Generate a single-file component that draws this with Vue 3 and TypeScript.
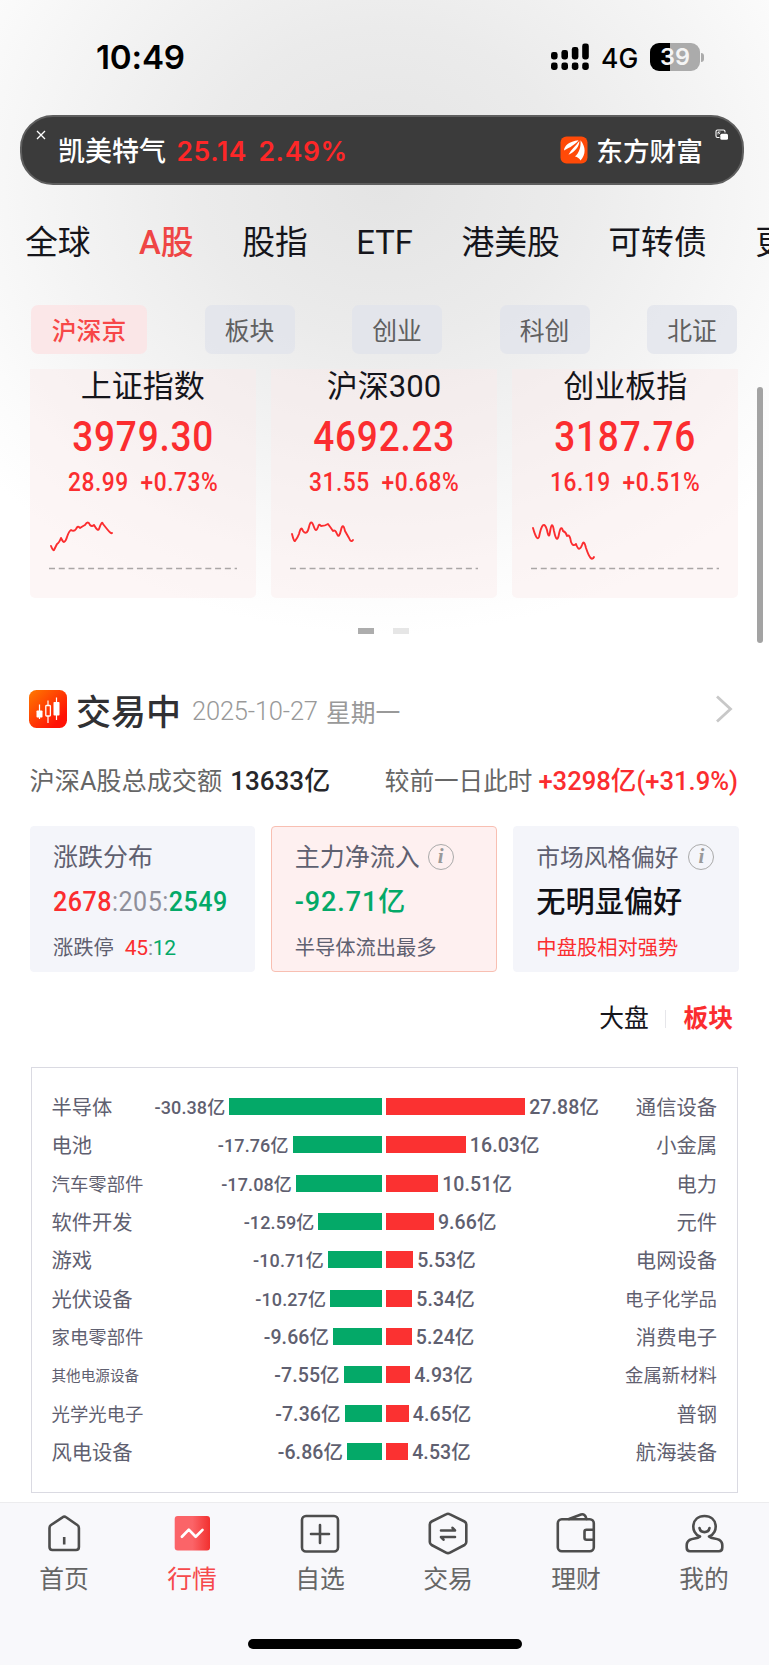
<script setup lang="ts">
interface IndexCard { name: string; value: string; diff: string; pct: string; line: string }
interface Flow { name: string; amount: number; size: number }

const tabs = ['全球', 'A股', '股指', 'ETF', '港美股', '可转债', '更多']
const chips = ['沪深京', '板块', '创业', '科创', '北证']

const cards: IndexCard[] = [
  { name: '上证指数', value: '3979.30', diff: '28.99', pct: '+0.73%', line: 'M2 26 Q4 31 5 30 L8 24 Q10 23 12 18 Q14 22 15 22 Q17 21 18 17 Q20 11 22 10 Q25 12 27 9 Q29 5 31 8 Q34 6 36 5 Q39 0 41 5 Q43 7 45 5 Q49 12 50 9 Q53 0 54 4 L58 9 Q62 14 63 13' },
  { name: '沪深300', value: '4692.23', diff: '31.55', pct: '+0.68%', line: 'M2 14 Q4 22 5 21 Q8 17 9 14 Q11 5 13 11 Q17 16 19 7 Q21 -2 24 7 Q26 13 28 7 Q29 3 31 6 Q35 6 38 4 Q41 8 43 11 Q45 9 47 14 Q49 19 51 10 Q53 2 55 11 L59 18 Q61 23 63 20' },
  { name: '创业板指', value: '3187.76', diff: '16.19', pct: '+0.51%', line: 'M2 8 Q6 22 8 17 Q12 -3 16 10 Q18 20 19 12 Q21 -1 23 11 Q26 25 28 14 Q30 4 32 11 Q35 12 36 16 Q39 14 40 22 Q42 27 45 24 Q48 33 51 25 Q53 19 55 28 Q60 43 63 37' },
]

const outflows: Flow[] = [
  { name: '半导体', amount: -30.38, size: 20.3 },
  { name: '电池', amount: -17.76, size: 20.3 },
  { name: '汽车零部件', amount: -17.08, size: 18.4 },
  { name: '软件开发', amount: -12.59, size: 20.3 },
  { name: '游戏', amount: -10.71, size: 20.3 },
  { name: '光伏设备', amount: -10.27, size: 20.3 },
  { name: '家电零部件', amount: -9.66, size: 18.4 },
  { name: '其他电源设备', amount: -7.55, size: 14.6 },
  { name: '光学光电子', amount: -7.36, size: 18.4 },
  { name: '风电设备', amount: -6.86, size: 20.3 },
]
const inflows: Flow[] = [
  { name: '通信设备', amount: 27.88, size: 20.3 },
  { name: '小金属', amount: 16.03, size: 20.3 },
  { name: '电力', amount: 10.51, size: 20.3 },
  { name: '元件', amount: 9.66, size: 20.3 },
  { name: '电网设备', amount: 5.53, size: 20.3 },
  { name: '电子化学品', amount: 5.34, size: 18.4 },
  { name: '消费电子', amount: 5.24, size: 20.3 },
  { name: '金属新材料', amount: 4.93, size: 18.4 },
  { name: '普钢', amount: 4.65, size: 20.3 },
  { name: '航海装备', amount: 4.53, size: 20.3 },
]
const rows = outflows.map((out, i) => ({ out, inn: inflows[i] }))
const barWidth = (amount: number): string => `${(Math.abs(amount) * 5.01).toFixed(1)}px`
</script>

<template>
  <div class="page">
    <header class="status">
      <span class="time">10:49</span>
      <span class="radio">
        <svg class="signal" width="39" height="28" viewBox="0 0 39 28">
          <rect x="0" y="9" width="6.6" height="7.5" rx="2.4" /><rect x="10.4" y="7" width="6.6" height="9.5" rx="2.4" />
          <rect x="20.8" y="4" width="6.6" height="12.5" rx="2.4" /><rect x="31.2" y="0.5" width="6.6" height="16" rx="2.4" />
          <rect x="0" y="19.6" width="6.6" height="7.4" rx="2.4" /><rect x="10.4" y="19.6" width="6.6" height="7.4" rx="2.4" />
          <rect x="20.8" y="19.6" width="6.6" height="7.4" rx="2.4" /><rect x="31.2" y="19.6" width="6.6" height="7.4" rx="2.4" />
        </svg>
        <span class="net">4G</span>
        <span class="battery">39</span>
        <i class="nub"></i>
      </span>
    </header>

    <section class="ticker">
      <svg class="close" width="10" height="10" viewBox="0 0 10 10"><path d="M1 1 9 9M9 1 1 9" fill="none" stroke="#fff" stroke-width="1.3" /></svg>
      <span class="t-name">凯美特气</span>
      <span class="t-num price">25.14</span>
      <span class="t-num rate">2.49%</span>
      <svg class="logo" width="28" height="28" viewBox="0 0 28 28">
        <rect x="0.5" y="0.5" width="27" height="27" rx="6" fill="#ff4a08" />
        <path d="M4 14.500C4 10 9 5.500 18.500 4.300C16 8 10 11.500 4 14.500Z" fill="#fff" />
        <path d="M8.500 18.800C11 13.500 16 10 19.300 5C19.500 10 15.500 15.500 8.500 18.800Z" fill="#fff" />
        <path d="M15 20.500C19.500 16.500 21 11 20.500 4.300C26 11 26 18.500 20.500 24.500C19.500 22.500 17.500 21 15 20.500Z" fill="#fff" />
      </svg>
      <span class="brand">东方财富</span>
      <svg class="pip" width="14" height="12" viewBox="0 0 14 12">
        <path d="M4.500 8.500H2.500Q1 8.500 1 7V2.500Q1 1 2.500 1H8.500Q10 1 10 2.500V3.500" fill="none" stroke="#fff" stroke-width="1.1" />
        <rect x="5.300" y="4.700" width="7.700" height="6" rx="1.500" fill="#fff" /><path d="M3 5.500V3H5.500M3 3 5 5" stroke="#fff" stroke-width="0.800" fill="none" />
      </svg>
    </section>

    <nav class="tabs">
      <span v-for="t in tabs" :key="t" :class="{ on: t === 'A股' }">{{ t }}</span>
    </nav>

    <nav class="chips">
      <span v-for="(c, i) in chips" :key="c" :class="['chip', { on: i === 0 }]">{{ c }}</span>
    </nav>

    <section class="cards">
      <article v-for="c in cards" :key="c.name" class="card">
        <h3>{{ c.name }}</h3>
        <p class="value">{{ c.value }}</p>
        <p class="delta"><span>{{ c.diff }}</span><span>{{ c.pct }}</span></p>
        <svg class="spark" width="188" height="60" viewBox="0 0 188 60">
          <path :d="c.line" fill="none" stroke="#fb2d2f" stroke-width="1.900" stroke-linejoin="round" stroke-linecap="round" />
          <path d="M0 48.500H188" stroke="#aaa6a6" stroke-width="1.300" stroke-dasharray="6 3.770" />
        </svg>
      </article>
      <i class="scroll"></i>
    </section>
    <div class="dots"><i class="cur"></i><i></i></div>

    <section class="session">
      <svg width="38" height="38" viewBox="0 0 38 38">
        <defs><linearGradient id="hot" x1="0" y1="0" x2="1" y2="1"><stop offset="0" stop-color="#ff7a00" /><stop offset="0.800" stop-color="#ff1205" /></linearGradient></defs>
        <rect width="38" height="38" rx="7.500" fill="url(#hot)" />
        <rect x="7.500" y="20.500" width="6" height="7" rx="0.800" fill="#fff" /><path d="M10.500 14.500V29M19 10.500V15.500M19 26V33M27.500 7.500V30" stroke="#fff" stroke-width="1.200" />
        <rect x="16.800" y="15.500" width="4.600" height="10.500" rx="0.800" fill="none" stroke="#fff" stroke-width="1.300" />
        <rect x="24.500" y="12" width="6" height="13.500" rx="0.800" fill="#fff" />
      </svg>
      <h2>交易中</h2>
      <span class="date">2025-10-27</span><span class="week">星期一</span>
      <svg class="chev" width="18" height="28" viewBox="0 0 18 28"><path d="M2 1.500 15.500 14 2 26.500" fill="none" stroke="#c8c8c8" stroke-width="2.800" /></svg>
    </section>

    <section class="turnover">
      <p>沪深A股总成交额<b class="dark">13633亿</b></p>
      <p class="compare">较前一日此时<b class="up">+3298亿(+31.9%)</b></p>
    </section>

    <section class="stats">
      <article class="stat">
        <h4>涨跌分布</h4>
        <p class="big split"><span class="up">2678</span><span class="flat">:205:</span><span class="down">2549</span></p>
        <p class="small">涨跌停<span class="ratio"><span class="up">45</span><span class="flat">:</span><span class="down">12</span></span></p>
      </article>
      <article class="stat sel">
        <h4>主力净流入<i class="info">i</i></h4>
        <p class="big down wide">-92.71亿</p>
        <p class="small">半导体流出最多</p>
      </article>
      <article class="stat">
        <h4 class="tight">市场风格偏好<i class="info">i</i></h4>
        <p class="big cn">无明显偏好</p>
        <p class="small up">中盘股相对强势</p>
      </article>
    </section>

    <div class="switch"><span>大盘</span><i></i><b>板块</b></div>

    <section class="chart">
      <div v-for="r in rows" :key="r.out.name" class="row">
        <div class="half">
          <span class="label" :style="{ fontSize: r.out.size + 'px' }">{{ r.out.name }}</span>
          <span :class="['amt', { sm: r.out.amount <= -10 }]">{{ r.out.amount.toFixed(2) }}亿</span>
          <i class="bar green" :style="{ width: barWidth(r.out.amount) }"></i>
        </div>
        <div class="half">
          <i class="bar red" :style="{ width: barWidth(r.inn.amount) }"></i>
          <span class="amt">{{ r.inn.amount.toFixed(2) }}亿</span>
          <span class="label end" :style="{ fontSize: r.inn.size + 'px' }">{{ r.inn.name }}</span>
        </div>
      </div>
    </section>

    <footer class="dock">
      <div class="items">
        <a class="item">
          <svg viewBox="0 0 42 44"><path d="M6.500 17Q6.500 15 8 14L19.500 6.300Q21.300 5 23.100 6.300L34.300 14Q35.900 15 35.900 17V36Q35.900 39 33 39H9.400Q6.500 39 6.500 36Z" /><path d="M21.200 26V33.500" stroke-linecap="butt" /></svg>
          <span>首页</span>
        </a>
        <a class="item on">
          <svg viewBox="0 0 42 44">
            <defs><linearGradient id="tab"><stop offset="0.500" stop-color="#fb6468" /><stop offset="1" stop-color="#f2302f" /></linearGradient></defs>
            <rect x="3.700" y="5" width="35.300" height="34.600" rx="3" fill="url(#tab)" stroke="none" />
            <path d="M10.900 25.700 17.800 18.600 24.700 25.700 31.500 18.900" stroke="#fff" stroke-width="2.700" />
          </svg>
          <span>行情</span>
        </a>
        <a class="item">
          <svg viewBox="0 0 42 44"><rect x="3" y="5" width="36" height="35.500" rx="4" /><path d="M21 14V32M12 23H30" /></svg>
          <span>自选</span>
        </a>
        <a class="item">
          <svg viewBox="0 0 42 44"><path d="M19 3.300Q21 2.200 23 3.300L37.500 10.500Q39.300 11.500 39.300 13.500V31Q39.300 33 37.500 34L23 41.600Q21 42.700 19 41.600L4.600 34Q2.800 33 2.800 31V13.500Q2.800 11.500 4.600 10.500Z" /><path d="M14 19.500H28L25.500 16.800M28 26H14L16.500 28.700" /></svg>
          <span>交易</span>
        </a>
        <a class="item">
          <svg viewBox="0 0 42 44"><rect x="2.800" y="8.200" width="36" height="32" rx="4" /><path d="M14 8 26 3.500Q30 2.300 31.500 8M38.500 18.700H31.500Q29.500 18.700 29.500 20.700V26.700Q29.500 28.700 31.500 28.700H38.500" /></svg>
          <span>理财</span>
        </a>
        <a class="item">
          <svg viewBox="0 0 42 44"><path d="M17 25.500C7 22 8 5 21.500 5S36 22 26 25.500C29 28 32.500 27 36.500 29Q39.300 31 39.300 34V36.500Q39.300 40.200 36 40.200H7Q3.700 40.200 3.700 36.500V34Q3.700 31 6.500 29C10.500 27 14 28 17 25.500M16.500 17C17.500 22.500 25.500 22.500 26.500 17" /></svg>
          <span>我的</span>
        </a>
      </div>
      <i class="home-bar"></i>
    </footer>
  </div>
</template>

<style>
html, body { background: #fff; overflow: hidden; }
</style>

<style scoped>
* { box-sizing: border-box; }
h2, h3, h4, p { margin: 0; font-weight: 400; }
i { font-style: normal; display: block; }
svg { display: block; flex: none; }
.page {
  width: 769px; height: 1665px; display: flex; flex-direction: column; overflow: hidden; white-space: nowrap;
  font-family: Roboto, "Noto Sans CJK SC", sans-serif; color: #15151b;
  background: radial-gradient(ellipse 520px 450px at 384px 185px, #e4e4e4 0%, #ebebeb 35%, #f4f4f4 64%, #fbfbfb 85%, #fff 100%) no-repeat #fff;
}
.status { height: 115px; flex: none; display: flex; justify-content: space-between; padding: 37px 65px 0 96px; font-family: Inter, sans-serif; color: #000; }
.time { font-size: 33.200px; line-height: 40px; font-weight: 600; letter-spacing: -0.2px; }
.radio { display: flex; align-items: center; height: 40px; }
.net { font-size: 26.500px; font-weight: 500; margin-left: 11px; width: 49px; line-height: 40px; padding-top: 1px; }
.battery { width: 50px; height: 28px; border-radius: 9px; background: linear-gradient(90deg, #000 20px, #ababab 20px); color: #f4f4f4; font-size: 23.500px; line-height: 28px; font-weight: 600; text-align: center; }
.nub { width: 3px; height: 9px; margin-left: 1px; border-radius: 0 4px 4px 0; background: #ababab; }

.ticker { flex: none; height: 70px; margin: 0 25px 0 20px; border: 2px solid #5e5e5e; border-radius: 33px; background: #3b3b3b; color: #fff; display: flex; align-items: center; padding: 0 13px 0 14px; font-weight: 500; }
.close { align-self: flex-start; margin-top: 13px; }
.t-name { font-size: 27px; margin-left: 12px; width: 118.500px; margin-top: -2px; }
.t-num { font: 600 26.500px/40px Inter, sans-serif; letter-spacing: 0.6px; color: #fd2728; margin-top: 1px; }
.price { width: 82px; }
.logo { margin-left: auto; }
.brand { font-size: 26.700px; margin: -2px 12px 0 8.500px; }
.pip { align-self: flex-start; margin-top: 12px; }

.tabs { flex: none; height: 120px; padding: 34px 0 0 25px; display: flex; gap: 48.500px; font-size: 32.800px; line-height: 48px; overflow: hidden; }
.tabs span { flex: none; }
.tabs .on { color: #ef4545; font-weight: 500; }
.chips { flex: none; height: 49px; margin: 0 32px 0 31px; display: flex; justify-content: space-between; }
.chip { width: 90px; border-radius: 7px; background: rgba(224, 227, 235, .7); color: #606060; font-size: 24.800px; line-height: 53px; text-align: center; }
.chip.on { width: 116px; background: rgba(252, 225, 227, .75); color: #f74747; font-weight: 500; }

.cards { flex: none; height: 229px; margin: 15px 30.500px 0 29.500px; display: flex; gap: 15px; position: relative; }
.card { flex: 1; background: rgba(250, 234, 234, .42); border-radius: 0 0 5px 5px; text-align: center; }
.card h3 { font-size: 31px; line-height: 36px; }
.value { color: #fb2d2f; font-size: 42px; line-height: 50px; font-weight: 500; letter-spacing: 0.9px; margin-top: 7px; transform: scaleX(.88); }
.delta { color: #fb2d2f; font-size: 25px; line-height: 30px; margin-top: 6px; display: flex; justify-content: center; gap: 13px; font-weight: 500; letter-spacing: 0.6px; transform: scaleX(.91); }
.spark { margin: 22px 0 0 19px; }
.scroll { position: absolute; right: -24px; top: 18px; width: 6px; height: 256px; border-radius: 3px; background: #a3a3a3; }
.dots { flex: none; height: 67px; padding-top: 30px; display: flex; justify-content: center; gap: 19px; margin-right: 2px; }
.dots i { width: 16px; height: 6px; background: #e6e6e6; }
.dots .cur { background: #adadad; }

.session { flex: none; margin: 25px 36px 0 29px; height: 38px; display: flex; align-items: center; }
.session h2 { font-size: 35px; font-weight: 500; color: #303033; margin-left: 9px; }
.date { font-size: 25.500px; color: #999; margin-left: 11px; width: 134px; padding-top: 4px; letter-spacing: -0.2px; font-weight: 350; }
.week { font-size: 24.800px; color: #999; padding-top: 3px; }
.chev { margin-left: auto; }

.turnover { flex: none; margin: 33px 31px 0 29.500px; height: 40px; display: flex; justify-content: space-between; font-size: 25.200px; line-height: 40px; color: #666; }
.turnover b { font-size: 26px; font-weight: 500; margin-left: 8px; }
.turnover .compare { font-size: 24.600px; }
.turnover .compare b { font-size: 25.600px; margin-left: 6px; }
.dark { color: #26262a; }
.turnover .up, .up { color: #fb2d2f; }
.down { color: #04a968; }
.flat { color: #8f8f99; }

.stats { flex: none; margin: 25px 30.500px 0 29.500px; height: 146px; display: flex; gap: 16px; }
.stat { flex: 1; background: #f4f5fa; border: 1px solid #f4f5fa; border-radius: 4px; padding: 12px 0 0 22.500px; }
.stat.sel { background: #fef0f0; border-color: #f8bfb2; }
.stat h4 { font-size: 25px; line-height: 38px; color: #5f6070; display: flex; align-items: center; }
.stat h4.tight { font-size: 23.700px; }
.info { width: 26px; height: 26px; border: 1.500px solid #aaa; border-radius: 50%; margin-left: 8px; margin-top: -3px; font: italic 700 21px/22px "Liberation Serif", serif; color: #999; text-align: center; }
.tight .info { margin-left: 10px; }
.big { font-size: 27px; line-height: 40px; font-weight: 500; margin-top: 5px; }
.split { transform: scaleX(.93); transform-origin: left; letter-spacing: 0.5px; }
.wide { letter-spacing: 0.9px; }
.big .flat { font-weight: 400; }
.big.cn { font-size: 29.200px; color: #101016; }
.small { font-size: 20.300px; line-height: 30px; margin-top: 11px; color: #5f6070; display: flex; }
.small.up { color: #fb2d2f; }
.ratio { margin-left: 11px; font-size: 21px; letter-spacing: -0.3px; }

.switch { flex: none; height: 50px; margin: 22px 36px 0 0; display: flex; justify-content: flex-end; align-items: center; font-size: 24.800px; line-height: 50px; }
.switch i { width: 1.500px; height: 18px; background: #e6e6ea; margin: 0 17px 0 16px; }
.switch b { color: #fb2d2f; font-weight: 600; }

.chart { flex: none; height: 425.500px; margin: 23px 31px 0 30.500px; border: 1.500px solid #dadae2; padding: 19.500px 20px 0; }
.row { height: 38.300px; display: flex; gap: 4px; color: #5f6070; }
.half { display: flex; align-items: center; position: relative; }
.half:first-child { width: 330px; }
.half:last-child { flex: 1; }
.label { line-height: 38px; padding-top: 3px; }
.label.end { margin-left: auto; }
.half:first-child .amt { margin-left: auto; margin-right: 4px; }
.half:last-child .amt { margin-left: 4px; }
.amt { font-size: 19.500px; line-height: 38px; font-weight: 500; padding-top: 3px; letter-spacing: 0.1px; }
.amt.sm { font-size: 18px; }
.bar { height: 17px; flex: none; }
.green { background: #04a968; }
.red { background: #fb3131; }

.dock { flex: none; margin-top: 9.500px; height: 163px; background: #f8f8fb; border-top: 1.500px solid #ececee; }
.items { display: flex; height: 136px; padding-top: 7.500px; }
.item { width: 128px; display: flex; flex-direction: column; align-items: center; color: #666; font-size: 24.800px; line-height: 36px; }
.item svg { width: 42px; height: 44px; fill: none; stroke: #4d4d4d; stroke-width: 2.600; stroke-linecap: round; stroke-linejoin: round; }
.item span { margin-top: 7px; }
.item.on { color: #f6494b; }
.home-bar { width: 274px; height: 10px; border-radius: 5px; background: #000; margin: 0 auto; }
</style>
